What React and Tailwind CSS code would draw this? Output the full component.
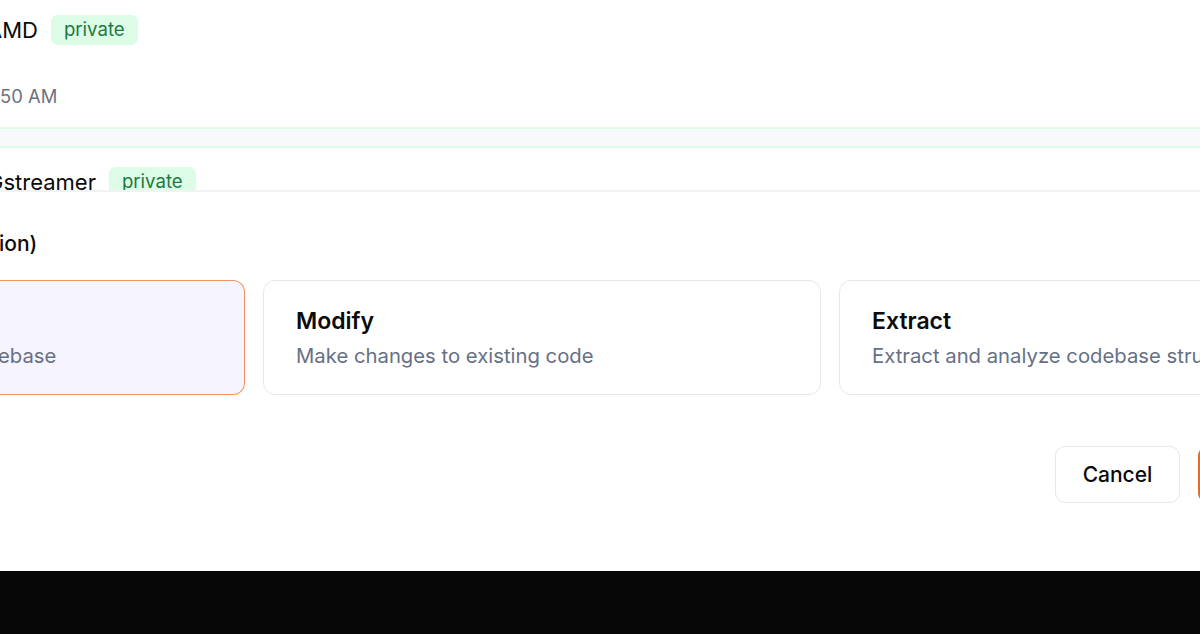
import React from 'react'

const font = { fontFamily: 'Inter, "Noto Sans", sans-serif' }

function Badge() {
  return (
    <span className="inline-flex h-[30px] items-center rounded-[7px] bg-[#dcfce7] px-[13px] text-[18.6px] text-[#1b7a3e]">
      private
    </span>
  )
}

function RepoRow({ name, nameShift, time }) {
  return (
    <div className="border-y-2 border-[#dcfce7] bg-white pt-[19px] pb-[19px]">
      <div className="flex h-[30px] items-center gap-[13px]">
        <span className={`text-[22px] leading-[30px] text-[#0b0b0b] ${nameShift}`}>{name}</span>
        <Badge />
      </div>
      {time && <div className="mt-[39px] text-[18.4px] leading-[24px] text-[#6b7280]">{time}</div>}
    </div>
  )
}

function TaskCard({ title, desc, selected, className = '' }) {
  return (
    <div
      className={`flex h-[115px] shrink-0 flex-col justify-center ${
        selected
          ? 'border border-[#f4915a] bg-[#f6f4fe]'
          : 'border border-[#e5e7eb] bg-white'
      } ${className}`}
    >
      <div className="h-[28px] text-[23px] font-semibold leading-[28px] text-[#0b0b0b]">{title}</div>
      <div className="mt-[8px] whitespace-nowrap text-[20.3px] leading-[26px] text-[#667085]">{desc}</div>
    </div>
  )
}

export default function App() {
  return (
    <div className="flex h-[634px] w-[1200px] flex-col overflow-hidden bg-[#070707]" style={font}>
      <div className="h-[571px] shrink-0 bg-white">
        <div className="w-[1397px]">
          {/* repository list, scrolled */}
          <div className="-mt-[6px] flex h-[198px] flex-col gap-[17px] overflow-hidden border-b-2 border-[#f1f2f4] bg-[#f8f9fb]">
            <RepoRow name="AMD" nameShift="-ml-[13px]" time="50 AM" />
            <RepoRow name="Gstreamer" nameShift="-ml-[13px]" />
          </div>

          <div className="mt-[38px] -ml-[1px] text-[21px] font-medium leading-[28px] text-[#0b0b0b]">ion)</div>

          <div className="mt-[22px] flex gap-[18px]">
            <TaskCard selected desc="ebase" className="-ml-[2px] w-[247px] rounded-r-[12px] border-l-0" />
            <TaskCard title="Modify" desc="Make changes to existing code" className="w-[558px] rounded-[12px] px-[32px]" />
            <TaskCard title="Extract" desc="Extract and analyze codebase structure" className="w-[558px] rounded-[12px] px-[32px]" />
          </div>

          <div className="mt-[51px] flex justify-end gap-[18px]">
            <button className="h-[57px] w-[125px] rounded-[10px] border border-[#e5e7eb] bg-white text-[21px] font-medium text-[#0b0b0b]">
              Cancel
            </button>
            <button className="h-[57px] w-[199px] rounded-[10px] bg-[#ea6a1f] text-[21px] font-medium text-white">
              Start Task
            </button>
          </div>
        </div>
      </div>
    </div>
  )
}
